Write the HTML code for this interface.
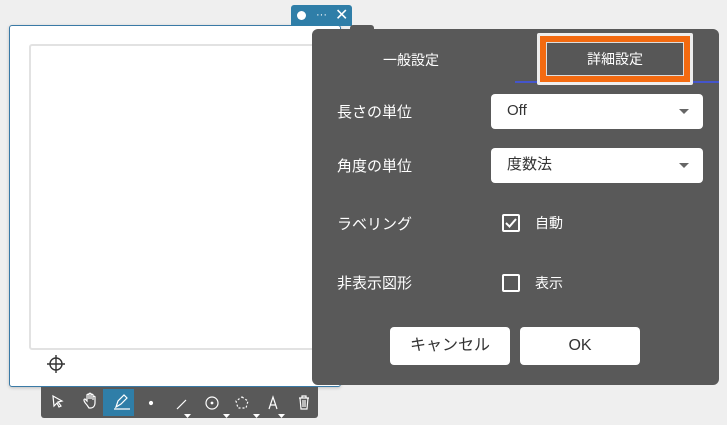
<!DOCTYPE html>
<html><head><meta charset="utf-8"><style>
body{margin:0;width:727px;height:425px;background:#efefef;position:relative;overflow:hidden;font-family:"Liberation Sans","Noto Sans CJK JP",sans-serif}
.abs{position:absolute}
.lbl{color:#fff;font-size:15px}
.sel{background:#fff;border-radius:4px;color:#333;font-size:15px;box-sizing:border-box;padding-left:16px;line-height:34px}
.sel:after{content:"";position:absolute;right:14px;top:15px;border:5px solid transparent;border-top:5px solid #666}
.btn{background:#fff;border-radius:4px;color:#333;font-size:16px;text-align:center;line-height:38px}
.cb{width:14px;height:14px;border:2px solid #fff;border-radius:2px}
</style></head><body>
<div class="abs" style="left:9px;top:25px;width:330px;height:360px;background:#fff;border:1px solid #3a7aa6;border-radius:3px;box-shadow:0 1px 3px rgba(0,0,0,.2)"></div>
<div class="abs" style="left:29px;top:44px;width:300px;height:302px;border:2px solid #e2e2e2;border-radius:3px"></div>
<svg class="abs" style="left:47px;top:355px" width="18" height="18"><circle cx="9" cy="9" r="6" fill="none" stroke="#333" stroke-width="1.4"/><path d="M9 0v18M0 9h18" stroke="#333" stroke-width="1.4"/></svg>
<div class="abs" style="left:291px;top:5px;width:61px;height:21px;background:#2f7ea8;border-radius:3px 3px 0 0"></div>
<div class="abs" style="left:297px;top:11px;width:9px;height:9px;background:#fff;border-radius:50%"></div>
<div class="abs" style="left:316px;top:9px;color:#fff;font-size:11px">···</div>
<div class="abs" style="left:335px;top:5px;color:#fff;font-size:16px">✕</div>
<div class="abs" style="left:350px;top:25px;width:24px;height:8px;background:#595959;border-radius:3px 3px 0 0"></div>
<div class="abs" style="left:312px;top:29px;width:407px;height:356px;background:#595959;border-radius:6px"></div>
<div class="abs" style="left:515px;top:81px;width:204px;height:2px;background:#4455cc"></div>
<div class="abs lbl" style="left:383px;top:50px;font-size:14px">一般設定</div>
<div class="abs" style="left:537px;top:33px;width:156px;height:52px;background:#eee;border-radius:2px"></div>
<div class="abs" style="left:540px;top:36px;width:150px;height:46px;background:#f36a10"></div>
<div class="abs" style="left:546px;top:42px;width:138px;height:34px;background:#575757;border:1px solid #ddd;box-sizing:border-box;color:#fff;font-size:14px;text-align:center;line-height:32px">詳細設定</div>
<div class="abs lbl" style="left:337px;top:101px">長さの単位</div>
<div class="abs sel" style="left:491px;top:94px;width:212px;height:35px">Off</div>
<div class="abs lbl" style="left:337px;top:155px">角度の単位</div>
<div class="abs sel" style="left:491px;top:148px;width:212px;height:35px">度数法</div>
<div class="abs lbl" style="left:337px;top:213px">ラベリング</div>
<div class="abs cb" style="left:502px;top:214px"></div>
<svg class="abs" style="left:502px;top:214px" width="18" height="18"><path d="M4 9l3.5 3.5L14 5" fill="none" stroke="#fff" stroke-width="2"/></svg>
<div class="abs lbl" style="left:535px;top:213px;font-size:14px">自動</div>
<div class="abs lbl" style="left:337px;top:272px">非表示図形</div>
<div class="abs cb" style="left:502px;top:274px"></div>
<div class="abs lbl" style="left:535px;top:273px;font-size:14px">表示</div>
<div class="abs btn" style="left:390px;top:327px;width:120px;height:38px">キャンセル</div>
<div class="abs btn" style="left:520px;top:327px;width:120px;height:38px">OK</div>
<div class="abs" style="left:41px;top:387px;width:277px;height:31px;background:#595959;border-radius:0 0 3px 3px"></div>
<div class="abs" style="left:103px;top:389px;width:31px;height:27px;background:#2f7ea8"></div>
<svg class="abs" style="left:41px;top:387px" width="277" height="38" fill="none" stroke="#fff" stroke-width="1.2">
<path d="M12 9l9 5-4 1 3 4-2 1-2-4-3 3z"/>
<path d="M46 18c-3-3-4-6-2-6l2 2v-6c0-1 2-1 2 0v4-5c0-1 2-1 2 0v5-4c0-1 2-1 2 0v5-3c0-1 2-1 2 0v6c0 3-2 5-4 5h-2z"/>
<path d="M75 20l2-6 6-6 3 3-6 6zM73 22h16"/>
<circle cx="110" cy="16" r="1.5" fill="#fff"/>
<path d="M136 22l9-9"/>
<circle cx="171" cy="16" r="6"/><circle cx="171" cy="16" r=".8" fill="#fff"/>
<path d="M201 10l6 4-2 7h-8l-2-7z" stroke-dasharray="2 2"/>
<path d="M228 22l4-12 4 12M229.5 18h5"/>
<path d="M258 11h10M261 11v-2h4v2M259 11l1 11h6l1-11M262 13v7M264 13v7"/>
<path d="M143 27h7l-3.5 4z M182 27h7l-3.5 4z M212 27h7l-3.5 4z M237 27h7l-3.5 4z" fill="#fff" stroke="none"/>
</svg>
</body></html>
